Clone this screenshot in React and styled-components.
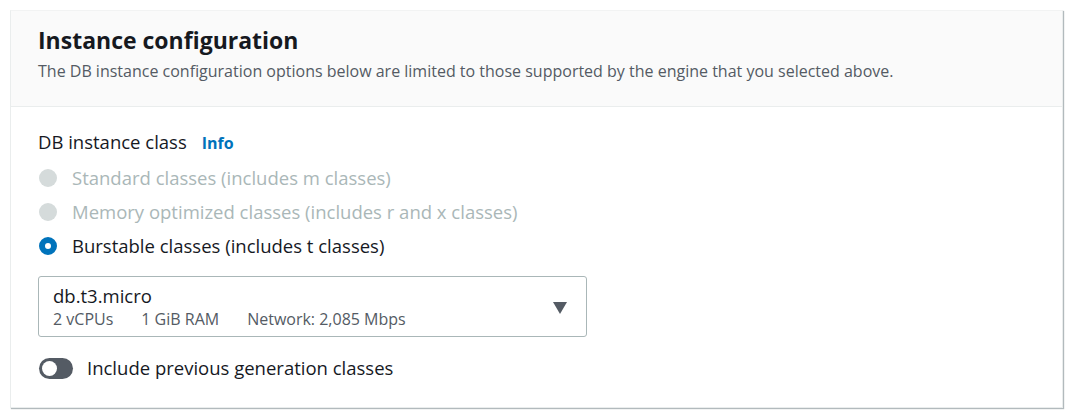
import React from 'react'
import styled, {createGlobalStyle} from 'styled-components'

const Global = createGlobalStyle`
    body {
        margin: 0;
        background: #ffffff;
        font-family: "Open Sans", "Noto Sans", sans-serif;
        color: #16191f;
    }
`

const Page = styled.div`
    padding: 10px 9px 4px 10px;
`

const Card = styled.div`
    border: 1px solid #eaeded;
    border-top-color: #f2f3f3;
    box-shadow: 1px 1px 1px 0 rgba(0, 28, 36, 0.3);
    background: #ffffff;
`

const Header = styled.div`
    background: #fafafa;
    border-bottom: 1px solid #eaeded;
    padding: 14px 27px 23px 27px;
    h2 {
        margin: 0;
        font-size: 23px;
        font-weight: 700;
        line-height: 31px;
    }
`

const Description = styled.div`
    margin-top: 3px;
    font-size: 16px;
    line-height: 24px;
    color: #545b64;
`

const Body = styled.div`
    padding: 22px 27px 26px 27px;
`

const Label = styled.div`
    display: flex;
    align-items: baseline;
    gap: 15px;
    font-size: 18.5px;
    line-height: 26px;
`

const InfoLink = styled.span`
    color: #0073bb;
    font-weight: 700;
    font-size: 16px;
`

const RadioGroup = styled.div`
    display: flex;
    flex-direction: column;
    gap: 8px;
    margin-top: 9px;
`

const RadioRow = styled.label`
    display: flex;
    align-items: center;
    gap: 15px;
    font-size: 18.5px;
    line-height: 26px;
    color: ${p => p.disabled ? '#aab7b8' : '#16191f'};
`

const Dot = styled.span`
    width: 18px;
    height: 18px;
    border-radius: 50%;
    box-sizing: border-box;
    flex-shrink: 0;
    margin-left: 1px;
    background: ${p => p.checked ? '#ffffff' : '#d5dbdb'};
    border: ${p => p.checked ? '6px solid #0073bb' : 'none'};
`

const Select = styled.div`
    margin-top: 17px;
    width: 549px;
    box-sizing: border-box;
    border: 1px solid #aab7b8;
    border-radius: 3px;
    padding: 7px 19px 6px 14px;
    display: flex;
    align-items: center;
    justify-content: space-between;
`

const Value = styled.div`
    font-size: 18.5px;
    line-height: 24px;
`

const Tags = styled.div`
    display: flex;
    gap: 28px;
    font-size: 16px;
    line-height: 22px;
    color: #545b64;
`

const Caret = styled.span`
    width: 0;
    height: 0;
    border-left: 7px solid transparent;
    border-right: 7px solid transparent;
    border-top: 12px solid #545b64;
    margin-top: 2px;
`

const ToggleRow = styled.div`
    display: flex;
    align-items: center;
    gap: 14px;
    margin-top: 18px;
    font-size: 18.5px;
    line-height: 26px;
`

const Toggle = styled.span`
    width: 34px;
    height: 21px;
    border-radius: 11px;
    background: #545b64;
    position: relative;
    flex-shrink: 0;
    margin-left: 1px;
    &::after {
        content: "";
        position: absolute;
        left: 3px;
        top: 3px;
        width: 15px;
        height: 15px;
        border-radius: 50%;
        background: #ffffff;
    }
`

const options = [
    {label: 'Standard classes (includes m classes)', disabled: true},
    {label: 'Memory optimized classes (includes r and x classes)', disabled: true},
    {label: 'Burstable classes (includes t classes)', checked: true},
]

const App = () => {
    return (
        <Page>
            <Global />
            <Card>
                <Header>
                    <h2>Instance configuration</h2>
                    <Description>
                        The DB instance configuration options below are limited to those supported by the engine that you selected above.
                    </Description>
                </Header>
                <Body>
                    <Label>
                        DB instance class <InfoLink>Info</InfoLink>
                    </Label>
                    <RadioGroup>
                        {options.map(o => (
                            <RadioRow key={o.label} disabled={o.disabled}>
                                <Dot checked={o.checked} />
                                {o.label}
                            </RadioRow>
                        ))}
                    </RadioGroup>
                    <Select>
                        <div>
                            <Value>db.t3.micro</Value>
                            <Tags>
                                <span>2 vCPUs</span>
                                <span>1 GiB RAM</span>
                                <span>Network: 2,085 Mbps</span>
                            </Tags>
                        </div>
                        <Caret />
                    </Select>
                    <ToggleRow>
                        <Toggle />
                        Include previous generation classes
                    </ToggleRow>
                </Body>
            </Card>
        </Page>
    )
}

export default App
